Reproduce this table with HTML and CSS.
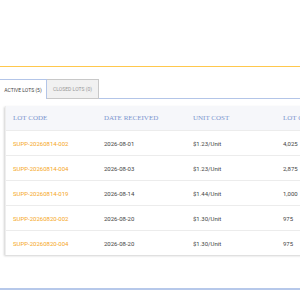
FILE: index.html
```html
<!DOCTYPE html>
<html>
<head>
<meta charset="utf-8">
<link rel="stylesheet" href="styles.css">
</head>
<body>
<div class="page">
  <div class="topbar"></div>
  <div class="tabs">
    <div class="tab active">ACTIVE LOTS (5)</div>
    <div class="tab closed">CLOSED LOTS (0)</div>
    <div class="tab-fill"></div>
  </div>
  <div class="panel">
    <div class="card">
      <div class="row head">
        <div class="cell">LOT CODE</div>
        <div class="cell">DATE RECEIVED</div>
        <div class="cell">UNIT COST</div>
        <div class="cell">LOT QUANTITY</div>
      </div>
      <div class="row">
        <div class="cell code">SUPP-20260814-002</div>
        <div class="cell">2026-08-01</div>
        <div class="cell">$1.23/Unit</div>
        <div class="cell">4,025</div>
      </div>
      <div class="row">
        <div class="cell code">SUPP-20260814-004</div>
        <div class="cell">2026-08-03</div>
        <div class="cell">$1.23/Unit</div>
        <div class="cell">2,875</div>
      </div>
      <div class="row">
        <div class="cell code">SUPP-20260814-019</div>
        <div class="cell">2026-08-14</div>
        <div class="cell">$1.44/Unit</div>
        <div class="cell">1,000</div>
      </div>
      <div class="row">
        <div class="cell code">SUPP-20260820-002</div>
        <div class="cell">2026-08-20</div>
        <div class="cell">$1.30/Unit</div>
        <div class="cell">975</div>
      </div>
      <div class="row last">
        <div class="cell code">SUPP-20260820-004</div>
        <div class="cell">2026-08-20</div>
        <div class="cell">$1.30/Unit</div>
        <div class="cell">975</div>
      </div>
    </div>
  </div>
  <div class="bottombar"></div>
</div>
</body>
</html>
```

FILE: styles.css
```css
html, body {
  margin: 0;
  padding: 0;
  background: #ffffff;
  overflow: hidden;
}
.page {
  width: 300px;
  height: 300px;
  overflow: hidden;
  font-family: Roboto, "Liberation Sans", sans-serif;
}
.topbar {
  margin-top: 66px;
  height: 1px;
  background: #ffc84d;
}
.tabs {
  display: flex;
  margin-top: 12px;
  height: 20px;
}
.tab {
  box-sizing: border-box;
  height: 20px;
  font-size: 5px;
  display: flex;
  align-items: center;
  justify-content: center;
}
.tab.active {
  width: 47px;
  border-top: 1px solid #b3c5e8;
  border-right: 1px solid #b3c5e8;
  color: #444;
  background: #fff;
}
.tab.closed {
  width: 52px;
  border: 1px solid #c8c8c8;
  border-left: none;
  background: #f1f1f1;
  color: #999;
}
.tab-fill {
  flex: 1;
  border-bottom: 1px solid #b3c5e8;
}
.panel {
  box-sizing: border-box;
  padding: 7px 0 0 5px;
  height: 174px;
}
.card {
  width: 320px;
  background: #fff;
  box-shadow: -1px 1px 2px rgba(0,0,0,0.18);
  border-left: 1px solid #eeeeee;
}
.row {
  display: grid;
  grid-template-columns: 91px 89px 90px 60px;
  height: 24px;
  align-items: center;
  border-bottom: 1px solid #ececec;
  font-size: 6px;
  color: #444;
}
.row.last {
  border-bottom: none;
}
.row.head {
  background: #f6f7fa;
  font-family: "Liberation Serif", serif;
  font-size: 7px;
  color: #7b95cf;
  height: 24px;
}
.cell {
  padding-left: 7px;
  white-space: nowrap;
}
.cell.code {
  color: #f5a623;
}
.bottombar {
  margin-top: 15px;
  height: 2px;
  background: #b6c8ea;
}
```
